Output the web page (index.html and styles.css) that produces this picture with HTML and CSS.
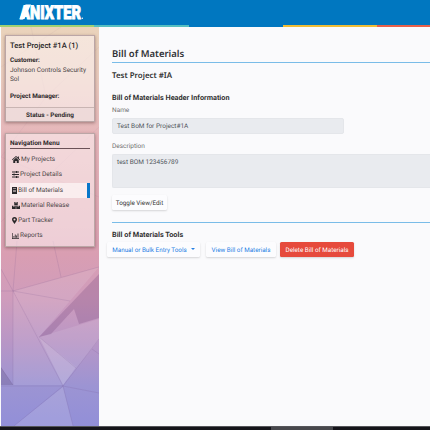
FILE: index.html
```html
<!DOCTYPE html>
<html lang="en">
<head>
<meta charset="utf-8">
<title>Bill of Materials</title>
<link rel="stylesheet" href="styles.css">
</head>
<body>
<header class="top">
  <svg class="logo" width="72" height="25" viewBox="0 0 72 25" role="img" aria-label="Anixter">
    <text x="2" y="18.500" textLength="61" lengthAdjust="spacingAndGlyphs">ANIXTER</text>
    <path d="M1.500 19 7.500 4.500H13L6.500 19z"/>
    <circle cx="64.300" cy="18.300" r=".7"/>
  </svg>
</header>
<div class="stripe"><i class="green"></i><i class="teal"></i><i></i><i class="yellow"></i><i class="orange"></i></div>
<div class="shell">
  <aside class="side">
    <svg class="facets" width="98" height="399" viewBox="0 0 98 399">
      <g fill="#fff">
        <path opacity=".1" d="M12 264 98 240 38 310zM38 310 98 292 98 313 62 358z"/>
        <path opacity=".13" d="M38 310 62 358 75 340zM62 360 13 399H72z"/>
        <path opacity=".09" d="M12 264 38 310 62 358H12z"/>
      </g>
      <path fill="#704078" opacity=".25" d="M98 247 38 310 50 307 73 282 78 297 98 291z"/>
      <path fill="#605080" opacity=".3" d="M0 340 12 358H0z"/>
      <path fill="none" stroke="#70508a" stroke-width=".7" opacity=".22" d="M0 264H12L98 240M12 264 69 274M12 264V358M12 264 62 359 98 366M12 264 0 242M12 264 16 214M0 359H62L13 399M62 359 72 399M38 310 75 341M62 359 98 312M52 214 60 250M91 322 98 327M0 341 12 358"/>
      <path fill="none" stroke="#70508a" stroke-width=".7" opacity=".08" d="M0 40 60 0M30 0 45 70 98 20M45 70 0 130 98 170M0 195 98 100"/>
    </svg>
    <section class="card project">
      <h2>Test Project #1A (1)</h2>
      <p class="customer"><b>Customer:</b><br>Johnson Controls Security<br>Sol</p>
      <p class="manager"><b>Project Manager:</b></p>
      <div class="status">Status - Pending</div>
    </section>
    <nav class="card menu">
      <h3>Navigation Menu</h3>
      <a><svg width="8" height="7" viewBox="0 0 16 14"><path d="M8 0 0 7l1 1.3L8 2l7 6.3L16 7l-2.2-2V1h-2.2v2zM8 3.4 2.5 8.3V14h4v-4h3v4h4V8.3z"/></svg>My Projects</a>
      <a><svg width="7" height="7" viewBox="0 0 14 14"><path d="M0 1.2h8V0h2.300v1.200H14v1.700h-3.700V4H8V2.900H0zM0 6.200h3V5h2.300v1.200H14v1.700H5.300V9H3V7.900H0zM0 11.200h8V10h2.300v1.200H14v1.700h-3.700V14H8v-1.100H0z"/></svg>Project Details</a>
      <a class="active"><svg width="5" height="7" viewBox="0 0 10 14"><path fill-rule="evenodd" d="M0 0h10v14H0zM2 3v1h6V3zM2 6v1h6V6zM2 9v1h6V9z"/></svg>Bill of Materials</a>
      <a><svg width="8" height="7" viewBox="0 0 16 14"><path d="M4.500 0H7v2.500h2V0h2.500v6.300h-7zM0 7.500h2.800v2h2v-2h2.700V14H0zM8.500 7.500h2.700v2h2v-2H16V14H8.500z"/></svg>Material Release</a>
      <a><svg width="5" height="7" viewBox="0 0 10 14"><path fill-rule="evenodd" d="M5 14C3.500 11 0 8 0 5a5 5 0 0 1 10 0c0 3-3.500 6-5 9zM5 3a2 2 0 1 0 0 4 2 2 0 0 0 0-4z"/></svg>Part Tracker</a>
      <a><svg width="7" height="6" viewBox="0 0 14 12"><path d="M0 0h1.300v10.500H14V12H0zM3 6h1.600v3.500H3zM5.700 3h1.600v6.500H5.700zM8.400 5H10v4.500H8.400zM11.200 1h1.600v8.500h-1.600z"/></svg>Reports</a>
    </nav>
  </aside>
  <main class="main">
    <h1>Bill of Materials</h1>
    <h2 class="name">Test Project #IA</h2>
    <h3 class="section">Bill of Materials Header Information</h3>
    <label>Name</label>
    <div class="field input">Test BoM for Project#1A</div>
    <label>Description</label>
    <div class="field area">test BOM 123456789</div>
    <button class="btn toggle">Toggle View/Edit</button>
    <h3 class="section tools">Bill of Materials Tools</h3>
    <div class="actions">
      <button class="btn link entry">Manual or Bulk Entry Tools<span class="caret"></span></button>
      <button class="btn link view">View Bill of Materials</button>
      <button class="btn danger">Delete Bill of Materials</button>
    </div>
  </main>
</div>
<footer class="taskbar"><span class="window"></span></footer>
</body>
</html>
```
FILE: styles.css
```css
* { box-sizing: border-box; }
body {
  margin: 0;
  width: 430px;
  height: 430px;
  overflow: hidden;
  display: flex;
  flex-direction: column;
  background: #fafafc;
  color: #555;
  font: 6.500px/9px Roboto, "Liberation Sans", sans-serif;
  text-rendering: geometricPrecision;
}
h1, h2, h3, p { margin: 0; }
.top { height: 25px; flex: none; background: #0077c0; padding-left: 18px; }
.logo { display: block; fill: #fff; }
.logo text {
  font: 900 19px Roboto, sans-serif;
  stroke: #fff;
  stroke-width: .9px;
}
.stripe { display: flex; flex: none; height: 2px; background: #0077c0; }
.stripe i { width: 94.300px; flex: none; }
.stripe .green { background: #9fd072; }
.stripe .teal { background: #55bfc0; }
.stripe .yellow { background: #efbd36; }
.stripe .orange { background: #e7604a; width: auto; flex: 1; }
.shell { display: flex; height: 399px; flex: none; }
.side {
  position: relative;
  width: 98px;
  margin-left: 1px;
  padding: 8px 4px 0;
  flex: none;
  background: linear-gradient(#ead3bb 0, #e9cbbd 12%, #e5b5ba 28%, #dea7b3 48%, #d99eb2 57%, #cf9cbc 68%, #b896c6 79%, #9c94d3 90%, #928fd8 100%);
}
.facets { position: absolute; left: 0; top: 0; }
.card {
  position: relative;
  width: 90px;
  border: 1px solid #bba6a6;
  background: rgba(255, 248, 248, .52);
  box-shadow: 0 1px 3px rgba(70, 40, 40, .45);
  color: #4b4547;
}
.project { height: 87px; display: flex; flex-direction: column; }
.project h2 { margin: 5px 0 0 4px; font-size: 7.600px; line-height: 10px; font-weight: 500; color: #252525; white-space: nowrap; }
.project p { margin-left: 4px; white-space: nowrap; line-height: 9.500px; }
.project b { color: #2c2829; font-weight: 700; font-size: 6.400px; }
.project .customer { margin-top: 5px; }
.project .manager { margin-top: 7px; }
.status {
  margin-top: auto;
  height: 14px;
  border-top: 1px solid #c9b5b3;
  background: rgba(230, 215, 215, .3);
  text-align: center;
  font-weight: 700;
  font-size: 6.400px;
  line-height: 14px;
  color: #302d2e;
}
.menu { margin-top: 11px; height: 114px; padding: 5px 4px 0; }
.menu h3 {
  height: 10px;
  border-bottom: 1px solid #6b5157;
  font-size: 6.500px;
  line-height: 9px;
  font-weight: 700;
  color: #302b2d;
  margin-bottom: 3px;
}
.menu a {
  display: flex;
  align-items: center;
  gap: 1.500px;
  height: 15.300px;
  padding-left: 1.500px;
  white-space: nowrap;
}
.menu a.active { background: rgba(255, 250, 250, .65); border-right: 3px solid #0877c9; height: 15px; }
.menu svg { fill: #2b292b; flex: none; }
.main {
  flex: 1;
  min-width: 0;
  margin-left: 13px;
  padding-top: 20px;
}
h1 {
  height: 16px;
  border-bottom: 1px solid #79bce8;
  font: 600 9.500px/14px "Noto Sans", sans-serif;
  color: #303236;
}
.name { margin-top: 8px; font: 600 7.900px/11px "Noto Sans", sans-serif; color: #333; }
.section { margin-top: 11px; font-size: 7.300px; line-height: 9px; font-weight: 700; color: #333; }
label { display: block; margin-top: 4px; color: #707070; }
.field {
  background: #e9ebef;
  border: 1px solid #e4e6ea;
  border-radius: 2px;
  padding-left: 4px;
  color: #50565c;
}
.input { width: 232px; height: 16px; margin-top: 3px; line-height: 15px; }
.area { height: 34px; margin-top: 3px; line-height: 15px; border-right: 0; border-radius: 2px 0 0 2px; }
.field + label { margin-top: 8px; }
.btn {
  display: block;
  flex: none;
  height: 15px;
  padding: 0;
  border: 0;
  border-radius: 1.500px;
  background: #fcfcfe;
  box-shadow: 0 1px 2px rgba(0, 0, 0, .15);
  font: 6.300px/14px Roboto, sans-serif;
  text-rendering: inherit;
  white-space: nowrap;
  color: #333;
}
.toggle { width: 55px; margin-top: 7px; }
.tools { border-top: 1px solid #79bce8; margin-top: 12px; padding-top: 7px; }
.actions { display: flex; margin: 3px 0 0 -5px; }
.link { color: #2680e4; }
.entry { width: 93px; margin-right: 6px; }
.view { width: 70px; margin-right: 4px; }
.caret {
  display: inline-block;
  margin-left: 4px;
  vertical-align: 1.500px;
  border: 2px solid transparent;
  border-top-color: #2680e4;
  border-bottom: 0;
}
.danger { width: 74px; background: #e64a3c; color: #fff; }
.taskbar { height: 4px; flex: none; background: #15141a; border-top: 1px solid #55555a; }
.window { display: block; width: 62px; height: 3px; margin-left: 271px; background: #47474c; }
```
